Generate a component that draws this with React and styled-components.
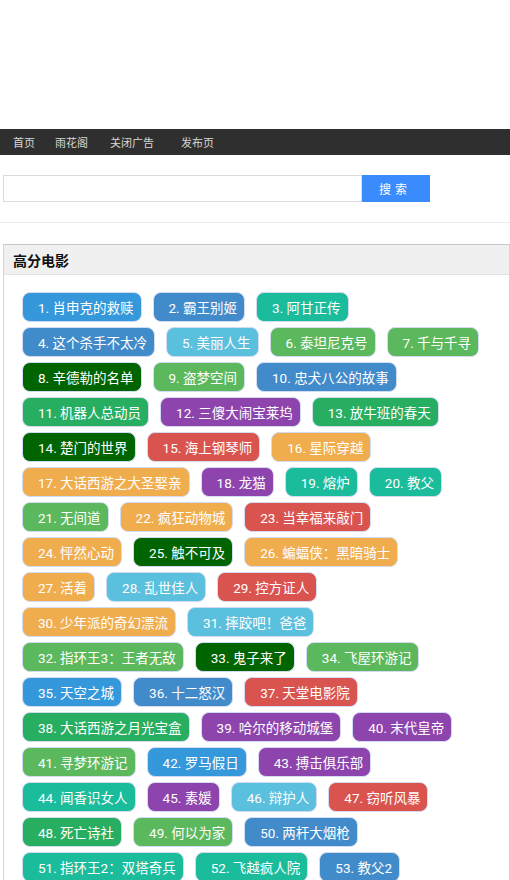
import React from "react";
import styled, { createGlobalStyle } from "styled-components";

const Global = createGlobalStyle`
  html, body { margin: 0; padding: 0; background: #fff; }
  body { font-family: Roboto, "Noto Sans CJK SC", sans-serif; }
`;

const C = {
  blue: "#3498db",
  primary: "#428bca",
  teal: "#1abc9c",
  info: "#5bc0de",
  success: "#5cb85c",
  dark: "#006400",
  green: "#27ae60",
  purple: "#8e44ad",
  red: "#d9534f",
  orange: "#f0ad4e",
};

const rows = [
  [[1, "肖申克的救赎", "blue"], [2, "霸王别姬", "primary"], [3, "阿甘正传", "teal"]],
  [[4, "这个杀手不太冷", "primary"], [5, "美丽人生", "info"], [6, "泰坦尼克号", "success"], [7, "千与千寻", "success"]],
  [[8, "辛德勒的名单", "dark"], [9, "盗梦空间", "success"], [10, "忠犬八公的故事", "primary"]],
  [[11, "机器人总动员", "green"], [12, "三傻大闹宝莱坞", "purple"], [13, "放牛班的春天", "green"]],
  [[14, "楚门的世界", "dark"], [15, "海上钢琴师", "red"], [16, "星际穿越", "orange"]],
  [[17, "大话西游之大圣娶亲", "orange"], [18, "龙猫", "purple"], [19, "熔炉", "teal"], [20, "教父", "teal"]],
  [[21, "无间道", "success"], [22, "疯狂动物城", "orange"], [23, "当幸福来敲门", "red"]],
  [[24, "怦然心动", "orange"], [25, "触不可及", "dark"], [26, "蝙蝠侠：黑暗骑士", "orange"]],
  [[27, "活着", "orange"], [28, "乱世佳人", "info"], [29, "控方证人", "red"]],
  [[30, "少年派的奇幻漂流", "orange"], [31, "摔跤吧！爸爸", "info"]],
  [[32, "指环王3：王者无敌", "success"], [33, "鬼子来了", "dark"], [34, "飞屋环游记", "success"]],
  [[35, "天空之城", "blue"], [36, "十二怒汉", "primary"], [37, "天堂电影院", "red"]],
  [[38, "大话西游之月光宝盒", "green"], [39, "哈尔的移动城堡", "purple"], [40, "末代皇帝", "purple"]],
  [[41, "寻梦环游记", "success"], [42, "罗马假日", "blue"], [43, "搏击俱乐部", "purple"]],
  [[44, "闻香识女人", "teal"], [45, "素媛", "purple"], [46, "辩护人", "info"], [47, "窃听风暴", "red"]],
  [[48, "死亡诗社", "green"], [49, "何以为家", "success"], [50, "两杆大烟枪", "primary"]],
  [[51, "指环王2：双塔奇兵", "teal"], [52, "飞越疯人院", "teal"], [53, "教父2", "primary"]],
];

const Page = styled.div`
  width: 510px;
`;

const Banner = styled.div`
  height: 129px;
`;

const Nav = styled.nav`
  height: 26px;
  background: #2f2f2f;
  display: flex;
  align-items: center;
  padding-left: 13px;
  font-family: "Noto Sans CJK SC", sans-serif;
  font-size: 11px;
`;

const NavLink = styled.a`
  color: #d8d8d8;
  text-decoration: none;
  margin-right: ${(p) => p.$gap}px;
`;

const SearchBar = styled.form`
  display: flex;
  padding: 20px 0 0 3px;
  margin: 0;
`;

const SearchInput = styled.input`
  box-sizing: border-box;
  width: 359px;
  height: 27px;
  border: 1px solid #dcdcdc;
  margin: 0;
  padding: 0 6px;
  outline: none;
`;

const SearchButton = styled.button`
  box-sizing: border-box;
  width: 68px;
  height: 27px;
  border: none;
  margin: 0;
  background: #3a8bfd;
  color: #fff;
  font-family: "Noto Sans CJK SC", sans-serif;
  font-size: 12px;
  letter-spacing: 4px;
  padding-left: 4px;
`;

const Divider = styled.div`
  height: 1px;
  background: #ececec;
  margin-top: 20px;
`;

const Panel = styled.section`
  margin: 21px 0 0 3px;
  border: 1px solid #d6d6d6;
  border-top-color: #c6c6c6;
  border-bottom: none;
`;

const PanelHead = styled.div`
  height: 29px;
  background: #f0f0f0;
  border-bottom: 1px solid #e2e2e2;
  display: flex;
  align-items: center;
  padding-left: 9px;
  font-family: "Noto Sans CJK SC", sans-serif;
  font-size: 14px;
  font-weight: bold;
  color: #111;
`;

const PanelBody = styled.div`
  padding: 17px 0 0 18px;
  display: flex;
  flex-direction: column;
  gap: 5px;
`;

const Row = styled.div`
  display: flex;
  gap: 11px;
`;

const Tag = styled.a`
  box-sizing: border-box;
  height: 30px;
  display: flex;
  align-items: center;
  padding: 0 7px 0 15px;
  border: 1px solid #d3dbf2;
  border-radius: 8px;
  background: ${(p) => C[p.$c]};
  color: #fff;
  font-family: Roboto, "Noto Sans CJK SC", sans-serif;
  font-size: 13.5px;
  white-space: nowrap;
  text-decoration: none;
`;

export default function App() {
  return (
    <Page>
      <Global />
      <Banner />
      <Nav>
        <NavLink href="#" $gap={20}>首页</NavLink>
        <NavLink href="#" $gap={22}>雨花阁</NavLink>
        <NavLink href="#" $gap={27}>关闭广告</NavLink>
        <NavLink href="#" $gap={0}>发布页</NavLink>
      </Nav>
      <SearchBar onSubmit={(e) => e.preventDefault()}>
        <SearchInput type="text" />
        <SearchButton type="submit">搜索</SearchButton>
      </SearchBar>
      <Divider />
      <Panel>
        <PanelHead>高分电影</PanelHead>
        <PanelBody>
          {rows.map((r, i) => (
            <Row key={i}>
              {r.map(([n, t, c]) => (
                <Tag key={n} href="#" $c={c}>
                  {n}. {t}
                </Tag>
              ))}
            </Row>
          ))}
        </PanelBody>
      </Panel>
    </Page>
  );
}
